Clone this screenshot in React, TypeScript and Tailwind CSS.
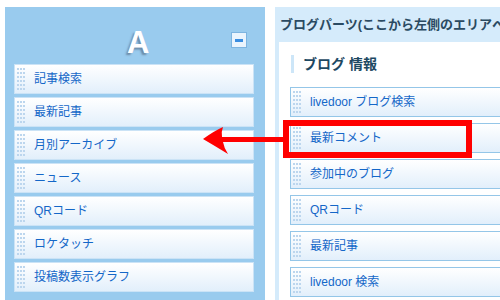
import React from 'react'

const leftItems = ['記事検索', '最新記事', '月別アーカイブ', 'ニュース', 'QRコード', 'ロケタッチ', '投稿数表示グラフ']
const rightItems = ['livedoor ブログ検索', '最新コメント', '参加中のブログ', 'QRコード', '最新記事', 'livedoor 検索']

function Grip() {
  const dots = []
  for (let r = 0; r < 6; r++) {
    for (let c = 0; c < 3; c++) {
      dots.push(<rect key={`${r}-${c}`} x={c * 3} y={r * 4} width={2} height={2} fill="#bcd6ee" />)
    }
  }
  return (
    <svg width="8" height="22" viewBox="0 0 8 22" className="shrink-0">
      {dots}
    </svg>
  )
}

function PartItem({ label, border }: { label: string; border: string }) {
  return (
    <div className={`flex items-center h-[30px] border ${border} bg-gradient-to-b from-white to-[#e2effb]`}>
      <div className="ml-[2px]">
        <Grip />
      </div>
      <span className="ml-[9px] text-[12px] text-[#1467c8] whitespace-nowrap">{label}</span>
    </div>
  )
}

export default function App() {
  return (
    <div className="relative w-[500px] h-[300px] overflow-hidden bg-white flex gap-[10px] pt-[7px] pl-[5px] font-['Liberation_Sans','Noto_Sans_CJK_JP',sans-serif]">
      {/* left column */}
      <div className="w-[260px] shrink-0 bg-[#99cbee] flex flex-col">
        <div className="flex items-start h-[57px]">
          <span className="ml-[122px] mt-[20px] text-[31px] leading-none font-bold text-white [text-shadow:-2px_2px_2px_rgba(70,85,110,0.55)]">
            A
          </span>
          <button className="ml-auto mr-[18px] mt-[25px] w-4 h-4 border border-[#7db4e0] bg-[#eaf4fd] flex items-center justify-center">
            <span className="w-[8px] h-[3px] bg-[#3a8de0]" />
          </button>
        </div>
        <div className="flex flex-col gap-[3px] pl-[9px] w-[249px]">
          {leftItems.map((t) => (
            <PartItem key={t} label={t} border="border-[#cbe3f6]" />
          ))}
        </div>
      </div>

      {/* right column */}
      <div className="w-[260px] shrink-0 flex flex-col">
        <div className="h-[35px] bg-[#d5ebfb] flex items-center pl-[5px] whitespace-nowrap overflow-hidden text-[13px] font-bold text-[#2a4a62]">
          ブログパーツ(ここから左側のエリアへ
        </div>
        <div className="flex-1 border-l-4 border-[#d5ebfb] bg-white pl-[11px]">
          <div className="mt-[13px] ml-[1px] h-[18px] border-l-[3px] border-[#cde6f8] flex items-center pl-[9px] text-[14px] font-bold text-[#1d4862]">
            ブログ 情報
          </div>
          <div className="mt-[14px] flex flex-col gap-[6px] w-[240px]">
            {rightItems.map((t) => (
              <PartItem key={t} label={t} border="border-[#94c6e8]" />
            ))}
          </div>
        </div>
      </div>

      {/* annotation overlay */}
      <svg className="absolute inset-0 pointer-events-none" width="500" height="300" viewBox="0 0 500 300">
        <rect x="286" y="123" width="183" height="32" fill="none" stroke="#ff0000" strokeWidth="6" />
        <path
          d="M203,139 Q214,131 223,127 Q221,132 222,137 L284,137 L284,142 L223,142 Q224,148 228,154 Q215,146 203,139 Z"
          fill="#ff0000"
        />
      </svg>
    </div>
  )
}
